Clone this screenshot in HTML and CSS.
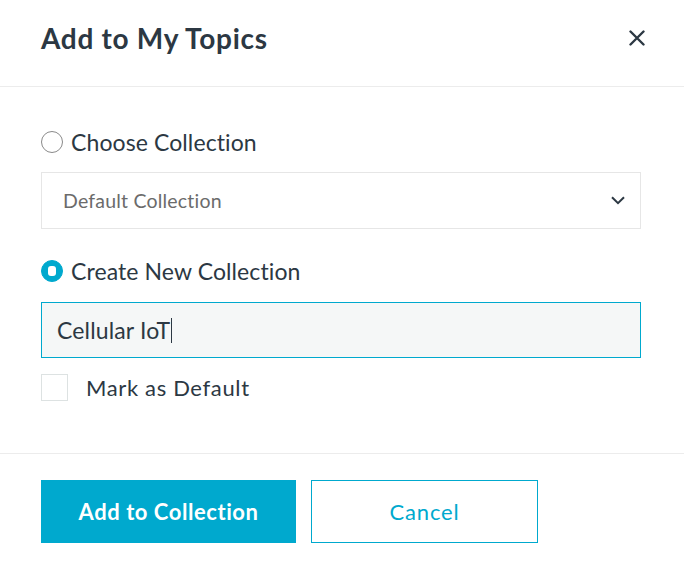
FILE: index.html
```html
<!DOCTYPE html>
<html lang="en">
<head>
<meta charset="utf-8">
<title>Add to My Topics</title>
<link rel="stylesheet" href="styles.css">
</head>
<body>
<div class="dialog">
  <header class="dialog-header">
    <h1 class="dialog-title">Add to My Topics</h1>
    <button class="close-btn" aria-label="Close">
      <svg width="16" height="16" viewBox="0 0 16 16"><path d="M1.5 1.5L14.5 14.5M14.5 1.5L1.5 14.5" stroke="#2c3843" stroke-width="2.4" stroke-linecap="round"/></svg>
    </button>
  </header>
  <main class="dialog-body">
    <label class="radio-row">
      <span class="radio"></span>
      <span class="radio-label">Choose Collection</span>
    </label>
    <div class="select">
      <span class="select-value">Default Collection</span>
      <svg class="chevron" width="14" height="9" viewBox="0 0 14 9"><path d="M1 1.2L7 7.2L13 1.2" fill="none" stroke="#2c3843" stroke-width="2"/></svg>
    </div>
    <label class="radio-row radio-row-second">
      <span class="radio radio-checked"><span class="radio-dot"></span></span>
      <span class="radio-label">Create New Collection</span>
    </label>
    <div class="text-input">
      <span class="input-value">Cellular IoT</span><span class="caret"></span>
    </div>
    <label class="check-row">
      <span class="checkbox"></span>
      <span class="check-label">Mark as Default</span>
    </label>
  </main>
  <footer class="dialog-footer">
    <button class="btn btn-primary">Add to Collection</button>
    <button class="btn btn-secondary">Cancel</button>
  </footer>
</div>
</body>
</html>
```

FILE: styles.css
```css
* { box-sizing: border-box; }
html, body { margin: 0; padding: 0; background: #fff; }
body {
  font-family: "Lato", "Open Sans", sans-serif;
  color: #2c3843;
  width: 684px;
  height: 564px;
  overflow: hidden;
}
.dialog { display: flex; flex-direction: column; }
.dialog-header {
  height: 87px;
  border-bottom: 1px solid #ececec;
  display: flex;
  align-items: center;
  justify-content: space-between;
  padding: 0 39px 10px 41px;
}
.dialog-title {
  margin: 0;
  font-size: 28px;
  font-weight: 700;
  letter-spacing: 0.7px;
  color: #2c3843;
}
.close-btn {
  border: 0;
  background: none;
  padding: 0;
  width: 16px;
  height: 16px;
  display: flex;
}
.dialog-body {
  padding: 41px 43px 0 41px;
  height: 367px;
  border-bottom: 1px solid #ececec;
  display: flex;
  flex-direction: column;
}
.radio-row {
  display: flex;
  align-items: center;
  gap: 8px;
  height: 28px;
}
.radio-row-second { margin-top: 28px; }
.radio {
  width: 22px;
  height: 22px;
  border-radius: 50%;
  border: 1px solid #8a8a8a;
  display: flex;
  align-items: center;
  justify-content: center;
}
.radio-checked {
  background: #00a9ce;
  border-color: #00a9ce;
}
.radio-dot {
  width: 8px;
  height: 10px;
  border-radius: 3px;
  background: #fff;
}
.radio-label {
  font-size: 23px;
  letter-spacing: 0.1px;
  color: #2c3843;
}
.select {
  margin-top: 16px;
  height: 57px;
  border: 1px solid #e6e6e6;
  display: flex;
  align-items: center;
  justify-content: space-between;
  padding: 0 15px 0 21px;
}
.select-value {
  font-size: 19.5px;
  letter-spacing: 0.2px;
  color: #6b6b6b;
}
.text-input {
  margin-top: 17px;
  height: 56px;
  border: 1px solid #00a9ce;
  background: #f5f7f7;
  display: flex;
  align-items: center;
  padding: 0 15px;
}
.input-value {
  font-size: 23px;
  letter-spacing: 0.15px;
  color: #2c3843;
}
.caret {
  width: 1px;
  height: 25px;
  background: #2c3843;
  margin-left: 1px;
}
.check-row {
  margin-top: 16px;
  display: flex;
  align-items: center;
  gap: 18px;
}
.checkbox {
  width: 27px;
  height: 27px;
  border: 1px solid #dde2e2;
}
.check-label {
  font-size: 22px;
  letter-spacing: 0.65px;
  color: #2c3843;
}
.dialog-footer {
  padding: 26px 41px 0;
  display: flex;
  gap: 15px;
}
.btn {
  font-family: "Lato", "Open Sans", sans-serif;
  font-size: 22px;
  height: 63px;
  cursor: pointer;
}
.btn-primary {
  width: 255px;
  background: #00a9ce;
  color: #fff;
  border: 0;
  font-weight: 700;
  letter-spacing: 0.55px;
}
.btn-secondary {
  width: 227px;
  background: #fff;
  color: #00a9ce;
  border: 1px solid #00a9ce;
  font-weight: 400;
  letter-spacing: 0.8px;
}
```
